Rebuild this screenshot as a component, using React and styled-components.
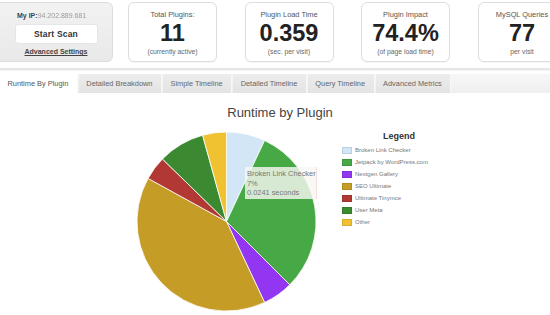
import React from 'react';
import styled, { createGlobalStyle } from 'styled-components';

const GlobalStyle = createGlobalStyle`
  body {
    margin: 0;
    background: #fff;
    font-family: "Liberation Sans", Arial, sans-serif;
    color: #333;
  }
`;

const stats = [
  { title: 'Total Plugins:', value: '11', note: '(currently active)' },
  { title: 'Plugin Load Time', value: '0.359', note: '(sec. per visit)' },
  { title: 'Plugin Impact', value: '74.4%', note: '(of page load time)' },
  { title: 'MySQL Queries', value: '77', note: 'per visit' },
];

const tabs = [
  'Runtime By Plugin',
  'Detailed Breakdown',
  'Simple Timeline',
  'Detailed Timeline',
  'Query Timeline',
  'Advanced Metrics',
];

const slices = [
  { name: 'Broken Link Checker', pct: 7, color: '#d3e6f6' },
  { name: 'Jetpack by WordPress.com', pct: 30.5, color: '#46a946' },
  { name: 'Nextgen Gallery', pct: 5.5, color: '#9236f2' },
  { name: 'SEO Ultimate', pct: 40, color: '#c59c26' },
  { name: 'Ultimate Tinymce', pct: 4.3, color: '#b23833' },
  { name: 'User Meta', pct: 8.4, color: '#3b8a31' },
  { name: 'Other', pct: 4.3, color: '#f0c232' },
];

const R = 89.5;

const point = (deg) => {
  const a = (deg - 90) * Math.PI / 180;
  return [R + R * Math.cos(a), R + R * Math.sin(a)];
};

const arcPath = (from, to) => {
  const [x1, y1] = point(from);
  const [x2, y2] = point(to);
  const large = to - from > 180 ? 1 : 0;
  return `M${R},${R} L${x1},${y1} A${R},${R} 0 ${large} 1 ${x2},${y2} Z`;
};

const PieChart = () => {
  let start = 0;
  return (
    <svg width={R * 2} height={R * 2} viewBox={`0 0 ${R * 2} ${R * 2}`}>
      {slices.map(s => {
        const end = start + s.pct * 3.6;
        const d = arcPath(start, end);
        start = end;
        return <path key={s.name} d={d} fill={s.color} stroke="#fff" strokeWidth="0.8" />;
      })}
    </svg>
  );
};

const App = () => {
  return (
    <Page>
      <GlobalStyle />
      <Header>
        <IpCard>
          <IpLine>My IP:<IpValue>94.202.889.681</IpValue></IpLine>
          <ScanButton>Start Scan</ScanButton>
          <SettingsLink>Advanced Settings</SettingsLink>
        </IpCard>
        <Stats>
          {stats.map(s => (
            <StatCard key={s.title}>
              <StatTitle>{s.title}</StatTitle>
              <StatValue>{s.value}</StatValue>
              <StatNote>{s.note}</StatNote>
            </StatCard>
          ))}
        </Stats>
      </Header>
      <Divider />
      <TabBar>
        {tabs.map((t, i) => (
          <Tab key={t} $active={i === 0}>{t}</Tab>
        ))}
      </TabBar>
      <ChartTitle>Runtime by Plugin</ChartTitle>
      <ChartBody>
        <PieWrap>
          <PieChart />
          <Tooltip>
            <span>Broken Link Checker</span>
            <span>7%</span>
            <span>0.0241 seconds</span>
          </Tooltip>
        </PieWrap>
        <Legend>
          <LegendTitle>Legend</LegendTitle>
          {slices.map(s => (
            <LegendItem key={s.name}>
              <Swatch $color={s.color} />
              {s.name}
            </LegendItem>
          ))}
        </Legend>
      </ChartBody>
    </Page>
  );
};

const Page = styled.div`
  width: 550px;
  height: 315px;
  overflow: hidden;
`;

const Header = styled.div`
  display: flex;
  gap: 15px;
  padding-top: 2px;
  height: 60px;
`;

const IpCard = styled.div`
  box-sizing: border-box;
  width: 113px;
  height: 60px;
  flex-shrink: 0;
  background: linear-gradient(#f2f2f2, #e9e9e9);
  border: 1px solid #dcdcdc;
  border-left: none;
  border-radius: 0 6px 6px 0;
  display: flex;
  flex-direction: column;
  align-items: center;
  padding-top: 9px;
`;

const IpLine = styled.div`
  font-size: 7px;
  font-weight: bold;
  color: #444;
  margin-left: 12px;
  align-self: flex-start;
  padding-left: 5px;
`;

const IpValue = styled.span`
  font-weight: normal;
  color: #9a9a9a;
  filter: blur(0.5px);
`;

const ScanButton = styled.div`
  box-sizing: border-box;
  margin-top: 5px;
  width: 83px;
  height: 20px;
  background: #fff;
  border: 1px solid #e6e6e6;
  border-radius: 3px;
  display: flex;
  align-items: center;
  justify-content: center;
  font-size: 8.5px;
  font-weight: bold;
  color: #333;
  letter-spacing: 0.2px;
`;

const SettingsLink = styled.div`
  margin-top: 4px;
  font-size: 7px;
  font-weight: bold;
  color: #444;
  text-decoration: underline;
`;

const Stats = styled.div`
  display: flex;
  gap: 27.5px;
`;

const StatCard = styled.div`
  box-sizing: border-box;
  width: 89px;
  height: 60px;
  flex-shrink: 0;
  background: #fff;
  border: 1px solid #dedede;
  border-radius: 6px;
  box-shadow: 0 1px 1px rgba(0, 0, 0, 0.04);
  display: flex;
  flex-direction: column;
  align-items: center;
  padding-top: 7px;
`;

const StatTitle = styled.div`
  font-size: 7.4px;
  color: #555;
`;

const StatValue = styled.div`
  font-size: 23.5px;
  font-weight: bold;
  color: #222;
  line-height: 24px;
  margin-top: 2px;
`;

const StatNote = styled.div`
  font-size: 6.8px;
  color: #666;
  margin-top: 3px;
`;

const Divider = styled.div`
  margin-top: 6px;
  height: 2px;
  background: #e6e6e6;
  border-bottom: 1px solid #f4f4f4;
`;

const TabBar = styled.div`
  margin-top: 3px;
  height: 19px;
  display: flex;
  background: linear-gradient(#f7f7f7, #efefef);
`;

const Tab = styled.div`
  display: flex;
  align-items: center;
  padding: 0 8.5px 0 7.5px;
  font-size: 7.4px;
  color: ${p => (p.$active ? '#555' : '#666')};
  background: ${p => (p.$active ? '#fff' : 'linear-gradient(#ededed, #e3e3e3)')};
  border-right: 1px solid #f8f8f8;
  margin-right: 1px;
`;

const ChartTitle = styled.div`
  margin-top: 12px;
  padding-left: 10px;
  text-align: center;
  font-size: 13px;
  line-height: 15px;
  color: #444;
`;

const ChartBody = styled.div`
  display: flex;
  align-items: flex-start;
  margin-top: 12px;
  padding-left: 137px;
`;

const PieWrap = styled.div`
  position: relative;
  width: 179px;
  height: 179px;
  svg {
    display: block;
  }
`;

const Tooltip = styled.div`
  position: absolute;
  left: 108px;
  top: 35px;
  width: 72px;
  height: 32px;
  box-sizing: border-box;
  padding: 2px 0 0 2px;
  background: rgba(248, 246, 242, 0.82);
  border-right: 1px solid rgba(240, 200, 200, 0.5);
  display: flex;
  flex-direction: column;
  font-size: 7.4px;
  line-height: 9.6px;
  color: #777;
  white-space: nowrap;
`;

const Legend = styled.div`
  margin-left: 26px;
  margin-top: -1px;
  display: flex;
  flex-direction: column;
`;

const LegendTitle = styled.div`
  font-size: 9px;
  font-weight: bold;
  color: #333;
  padding-left: 41px;
  margin-bottom: 3px;
`;

const LegendItem = styled.div`
  display: flex;
  align-items: center;
  height: 12px;
  font-size: 6px;
  color: #777;
`;

const Swatch = styled.span`
  width: 10px;
  height: 7px;
  margin-right: 3px;
  background: ${p => p.$color};
  border: 0.5px solid rgba(0, 0, 0, 0.1);
  box-sizing: border-box;
`;

export default App;
